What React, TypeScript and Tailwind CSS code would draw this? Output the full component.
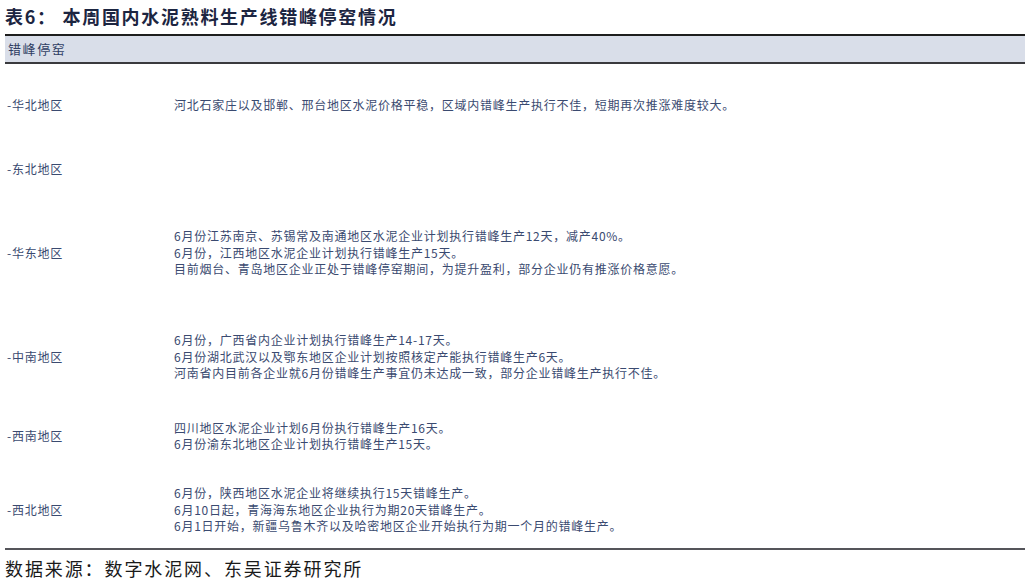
const rows = [
  { region: "-华北地区", h: "h-[82px]", lines: ["河北石家庄以及邯郸、邢台地区水泥价格平稳，区域内错峰生产执行不佳，短期再次推涨难度较大。"] },
  { region: "-东北地区", h: "h-[46px]", lines: [] },
  {
    region: "-华东地区",
    h: "h-[122px]",
    lines: [
      "6月份江苏南京、苏锡常及南通地区水泥企业计划执行错峰生产12天，减产40%。",
      "6月份，江西地区水泥企业计划执行错峰生产15天。",
      "目前烟台、青岛地区企业正处于错峰停窑期间，为提升盈利，部分企业仍有推涨价格意愿。",
    ],
  },
  {
    region: "-中南地区",
    h: "h-[86px]",
    lines: [
      "6月份，广西省内企业计划执行错峰生产14-17天。",
      "6月份湖北武汉以及鄂东地区企业计划按照核定产能执行错峰生产6天。",
      "河南省内目前各企业就6月份错峰生产事宜仍未达成一致，部分企业错峰生产执行不佳。",
    ],
  },
  {
    region: "-西南地区",
    h: "h-[72px]",
    lines: ["四川地区水泥企业计划6月份执行错峰生产16天。", "6月份渝东北地区企业计划执行错峰生产15天。"],
  },
  {
    region: "-西北地区",
    h: "h-[76px]",
    lines: [
      "6月份，陕西地区水泥企业将继续执行15天错峰生产。",
      "6月10日起，青海海东地区企业执行为期20天错峰生产。",
      "6月1日开始，新疆乌鲁木齐以及哈密地区企业开始执行为期一个月的错峰生产。",
    ],
  },
];

export default function App() {
  return (
    <div
      className="w-[1030px] h-[581px] bg-white overflow-hidden"
      style={{ fontFamily: '"Noto Sans CJK SC", "Noto Sans", sans-serif' }}
    >
      {/* title */}
      <div className="h-[34px] pl-[5px] pt-[4px] text-[18px] leading-[24px] font-bold text-[#1c2541] tracking-[1.7px]">
        表6：&nbsp;本周国内水泥熟料生产线错峰停窑情况
      </div>

      <div className="mx-[5px] w-[1020px]">
        <div className="border-t-2 border-b-2 border-t-[#1e1e1e] border-b-[#3a3a3e] bg-[#d9dee9] h-[30px] flex items-center pl-[3px] text-[13px] text-[#2f3d63] tracking-[1.6px]">
          错峰停窑
        </div>

        {rows.map((r) => (
          <div key={r.region} className={`${r.h} flex items-center text-[12px] text-[#3a4a70] tracking-[0.75px]`}>
            <div className="w-[169px] pl-[2px] shrink-0">{r.region}</div>
            <div className="flex flex-col leading-[16.5px]">
              {r.lines.map((l) => (
                <div key={l}>{l}</div>
              ))}
            </div>
          </div>
        ))}

        <div className="border-t-2 border-[#55555a]" />
      </div>

      <div className="pl-[5px] pt-[6px] text-[18px] leading-[24px] text-[#1a1a1a] tracking-[1.9px]">
        数据来源：数字水泥网、东吴证券研究所
      </div>
    </div>
  );
}
